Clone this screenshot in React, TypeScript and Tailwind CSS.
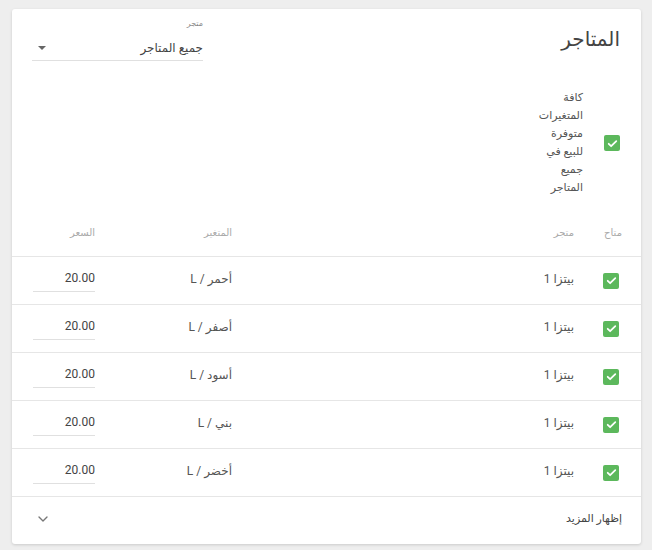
import { ChevronDown } from "lucide-react";

const rows = [
  { id: 1, store: "بيتزا 1", variant: "أحمر / L", price: "20.00" },
  { id: 2, store: "بيتزا 1", variant: "أصفر / L", price: "20.00" },
  { id: 3, store: "بيتزا 1", variant: "أسود / L", price: "20.00" },
  { id: 4, store: "بيتزا 1", variant: "بني / L", price: "20.00" },
  { id: 5, store: "بيتزا 1", variant: "أخضر / L", price: "20.00" },
];

function Check() {
  return (
    <span className="flex h-[16px] w-[16px] items-center justify-center rounded-[2px] bg-[#5cb85c]">
      <svg viewBox="0 0 24 24" className="h-[13px] w-[13px]" fill="none" stroke="#fff" strokeWidth="3.2" strokeLinecap="round" strokeLinejoin="round">
        <path d="M5 12.5l4.5 4.5L19 7.5" />
      </svg>
    </span>
  );
}

export default function App() {
  return (
    <div
      dir="rtl"
      className="min-h-[550px] w-[652px] bg-[#eeeeee] pt-[9px] pr-[11px] text-[#444]"
      style={{ fontFamily: "Roboto, 'DejaVu Sans', sans-serif" }}
    >
      <div className="w-[629px] rounded-[3px] bg-white shadow-[0_1px_3px_rgba(0,0,0,0.15)]">
        {/* top section */}
        <div className="flex h-[199px] justify-between pr-[21px] pl-[20px]">
          <div>
            <h1 className="pt-[17px] text-[20px] leading-[26px] font-normal text-[#444]">المتاجر</h1>
            <div className="mt-[37px] flex items-center gap-[21px]">
              <Check />
              <p className="text-[11px] leading-[18px] text-[#555]">
                كافة
                <br />
                المتغيرات
                <br />
                متوفرة
                <br />
                للبيع في
                <br />
                جميع
                <br />
                المتاجر
              </p>
            </div>
          </div>
          <div className="w-[171px] pt-[10px]">
            <div className="text-[8px] leading-[10px] text-[#888]">متجر</div>
            <div className="mt-[8px] flex h-[24px] items-center justify-between border-b border-[#e0e0e0] pb-[2px]">
              <span className="text-[12px] text-[#444]">جميع المتاجر</span>
              <span className="ml-[6px] h-0 w-0 border-x-[4px] border-t-[4px] border-x-transparent border-t-[#666]" />
            </div>
          </div>
        </div>

        {/* table header */}
        <div className="flex h-[48px] items-center pr-[19px] text-[10px] text-[#aaa]">
          <div className="w-[48px]">متاح</div>
          <div className="w-[342px]">متجر</div>
          <div className="w-[137px]">المتغير</div>
          <div className="w-[62px] pl-[1px]">السعر</div>
        </div>

        {rows.map((r) => (
          <div key={r.id} className="flex h-[48px] items-center border-t border-[#e6e6e6] pr-[19px] text-[12px] text-[#555]">
            <div className="w-[48px] pr-[3px]">
              <Check />
            </div>
            <div className="w-[342px] pb-[3px]">{r.store}</div>
            <div className="w-[137px] pb-[3px]">{r.variant}</div>
            <div className="w-[62px]">
              <div className="mb-[4px] flex h-[26px] items-center border-b border-[#e0e0e0] text-[12px] text-[#444]" dir="ltr">
                <span className="ml-auto">{r.price}</span>
              </div>
            </div>
          </div>
        ))}

        <div className="flex h-[48px] items-center justify-between border-t border-[#e6e6e6] pr-[19px] pl-[23px]">
          <span className="pb-[2px] text-[11px] text-[#444]">إظهار المزيد</span>
          <ChevronDown className="mb-[3px] h-[16px] w-[16px] text-[#777]" strokeWidth={2} />
        </div>
      </div>
    </div>
  );
}
